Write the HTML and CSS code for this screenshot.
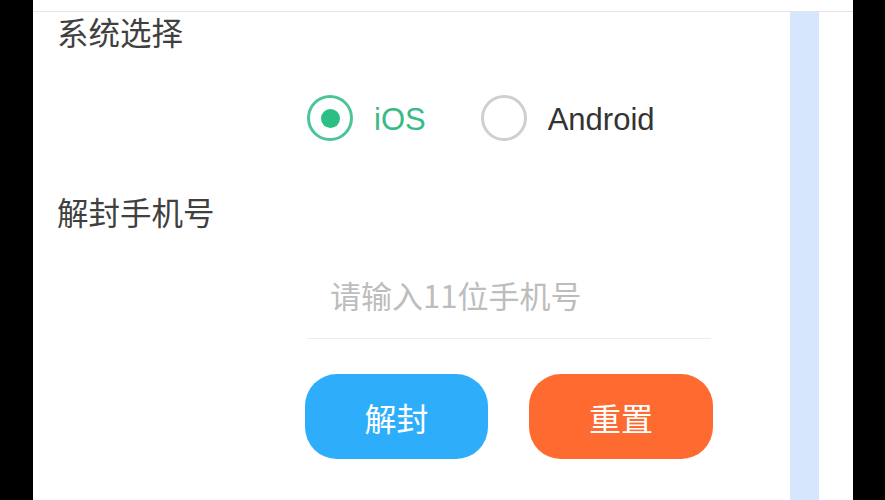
FILE: index.html
```html
<!DOCTYPE html>
<html lang="zh-CN">
<head>
<meta charset="utf-8">
<title>解封</title>
<link rel="stylesheet" href="styles.css">
</head>
<body>
<div class="screen">
  <div class="side side-left"></div>
  <div class="main">
    <div class="topbar"></div>
    <div class="content">
      <div class="form">
        <div class="label">系统选择</div>
        <div class="radios">
          <div class="radio checked"><span class="dot"></span><span class="rtext">iOS</span></div>
          <div class="radio"><span class="dot"></span><span class="rtext">Android</span></div>
        </div>
        <div class="label label-2">解封手机号</div>
        <div class="field"><span class="placeholder">请输入11位手机号</span></div>
        <div class="buttons">
          <div class="btn btn-blue">解封</div>
          <div class="btn btn-orange">重置</div>
        </div>
      </div>
      <div class="stripe"></div>
      <div class="gutter"></div>
    </div>
  </div>
  <div class="side side-right"></div>
</div>
</body>
</html>
```

FILE: styles.css
```css
* { box-sizing: border-box; }
html, body { margin: 0; padding: 0; background: #000; }
body {
  width: 885px;
  height: 500px;
  overflow: hidden;
  font-family: "Liberation Sans", "Noto Sans CJK SC", sans-serif;
}
.screen { display: flex; height: 500px; }
.side { background: #000; }
.side-left { width: 33px; }
.side-right { width: 32px; }
.main {
  width: 820px;
  background: #fff;
  display: flex;
  flex-direction: column;
}
.topbar {
  height: 12px;
  border-bottom: 1px solid #e4e4e4;
  background: #fff;
}
.content { flex: 1; display: flex; }
.form {
  width: 757px;
  padding-left: 24px;
}
.stripe {
  width: 29px;
  background: #d6e6fc;
}
.gutter { flex: 1; }
.label {
  font-family: "Noto Sans CJK SC", sans-serif;
  font-size: 31.5px;
  line-height: 40px;
  height: 40px;
  color: #404040;
  margin-top: -1px;
}
.label-2 { margin-top: 50px; }
.radios {
  display: flex;
  align-items: center;
  margin-left: 250px;
  margin-top: 44px;
  height: 46px;
}
.radio { display: flex; align-items: center; }
.radio + .radio { margin-left: 55px; }
.dot {
  width: 46px;
  height: 46px;
  border-radius: 50%;
  border: 3px solid #cfcfcf;
  display: flex;
  align-items: center;
  justify-content: center;
}
.checked .dot { border-color: #4cc596; }
.checked .dot::after {
  content: "";
  width: 19px;
  height: 19px;
  border-radius: 50%;
  background: #2bbf83;
}
.rtext {
  margin-left: 21px;
  padding-top: 4px;
  font-size: 31px;
  color: #333;
}
.checked .rtext { color: #38bb86; }
.field {
  margin-left: 250px;
  margin-top: 44px;
  width: 404px;
  padding-left: 23px;
  padding-bottom: 23px;
  border-bottom: 1px solid #ededed;
}
.placeholder {
  display: block;
  font-family: "Noto Sans CJK SC", sans-serif;
  font-size: 31px;
  line-height: 40px;
  color: #bdbdbd;
}
.buttons {
  display: flex;
  margin-left: 248px;
  margin-top: 35px;
  gap: 41px;
}
.btn {
  width: 184px;
  height: 85px;
  border-radius: 32px;
  display: flex;
  align-items: center;
  justify-content: center;
  font-family: "Noto Sans CJK SC", sans-serif;
  font-size: 32px;
  color: #fff;
}
.btn-blue { width: 183px; background: #2eaefa; }
.btn-orange { background: #fe6a2f; }
```
